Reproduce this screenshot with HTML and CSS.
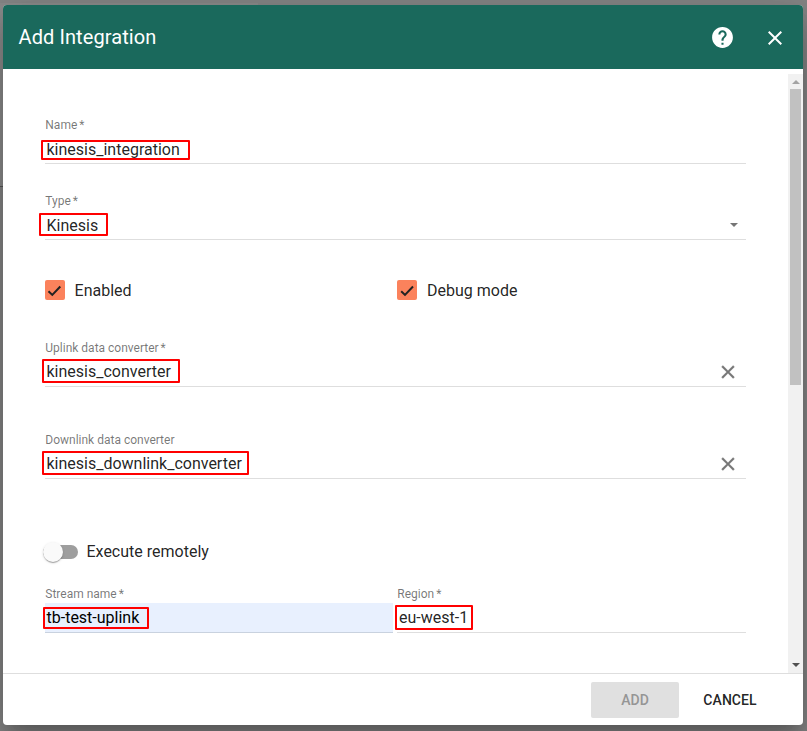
FILE: index.html
```html
<!DOCTYPE html>
<html lang="en">
<head>
<meta charset="utf-8">
<title>Add Integration</title>
<link rel="stylesheet" href="styles.css">
</head>
<body>
<div class="page-card"></div>
<div class="dialog">
  <header class="toolbar">
    <h2 class="title">Add Integration</h2>
    <svg class="help" viewBox="0 0 24 24"><path d="M12 2C6.48 2 2 6.48 2 12s4.48 10 10 10 10-4.48 10-10S17.520 2 12 2zm1 17h-2v-2h2v2zm2.070-7.750l-.9.920C13.450 12.900 13 13.500 13 15h-2v-.5c0-1.100.450-2.100 1.170-2.830l1.240-1.260c.370-.360.590-.860.590-1.410 0-1.100-.9-2-2-2s-2 .9-2 2H8c0-2.210 1.790-4 4-4s4 1.790 4 4c0 .880-.360 1.680-.930 2.250z"/></svg>
    <svg class="close" viewBox="0 0 24 24"><path d="M19 6.410L17.590 5 12 10.590 6.410 5 5 6.410 10.590 12 5 17.590 6.410 19 12 13.410 17.590 19 19 17.590 13.410 12z"/></svg>
  </header>
  <div class="content">
    <form class="form">
      <div class="field name">
        <label>Name <span class="req">*</span></label>
        <div class="value high"><span>kinesis_integration</span><i class="mark mark-name"></i></div>
      </div>
      <div class="field type">
        <label>Type <span class="req">*</span></label>
        <div class="value high"><span>Kinesis</span><i class="mark mark-type"></i><b class="arrow"></b></div>
      </div>
      <div class="columns checks">
        <div class="check"><span class="box"><svg viewBox="0 0 20 20"><path d="M3.500 11.200L7.300 14.900 15.300 6.500"/></svg></span><span>Enabled</span></div>
        <div class="check debug"><span class="box"><svg viewBox="0 0 20 20"><path d="M4.200 11.200L8 14.900 16 6.500"/></svg></span><span>Debug mode</span></div>
      </div>
      <div class="field uplink">
        <label>Uplink data converter <span class="req">*</span></label>
        <div class="value"><span>kinesis_converter</span><i class="mark mark-uplink"></i><svg class="clear" viewBox="0 0 24 24"><path d="M19 6.410L17.590 5 12 10.590 6.410 5 5 6.410 10.590 12 5 17.590 6.410 19 12 13.410 17.590 19 19 17.590 13.410 12z"/></svg></div>
      </div>
      <div class="field downlink">
        <label>Downlink data converter</label>
        <div class="value"><span>kinesis_downlink_converter</span><i class="mark mark-downlink"></i><svg class="clear" viewBox="0 0 24 24"><path d="M19 6.410L17.590 5 12 10.590 6.410 5 5 6.410 10.590 12 5 17.590 6.410 19 12 13.410 17.590 19 19 17.590 13.410 12z"/></svg></div>
      </div>
      <div class="remote"><span class="track"><span class="thumb"></span></span><span class="remote-text">Execute remotely</span></div>
      <div class="columns">
        <div class="field">
          <label>Stream name <span class="req">*</span></label>
          <div class="value autofill"><span>tb-test-uplink</span><i class="mark mark-stream"></i></div>
        </div>
        <div class="field">
          <label>Region <span class="req">*</span></label>
          <div class="value region"><span>eu-west-1</span><i class="mark mark-region"></i></div>
        </div>
      </div>
    </form>
    <div class="scrollbar"><span class="up"></span><span class="bar"></span><span class="down"></span></div>
  </div>
  <footer class="actions">
    <div class="btn add">ADD</div>
    <div class="btn cancel">CANCEL</div>
  </footer>
</div>
</body>
</html>
```
FILE: styles.css
```css
* { box-sizing: border-box; }
body {
  margin: 0;
  width: 807px;
  height: 731px;
  padding: 5px 4px 6px 3px;
  overflow: hidden;
  background: #858585;
  font-family: Roboto, "Liberation Sans", sans-serif;
  color: rgba(0, 0, 0, .87);
}
.page-card {
  position: absolute;
  left: -4px;
  top: 3px;
  width: 262px;
  height: 184px;
  background: #8b8b8b;
  border-bottom: 1px solid #565656;
}
.dialog {
  position: relative;
  width: 800px;
  height: 720px;
  display: flex;
  flex-direction: column;
  background: #fff;
  border-radius: 4px;
  overflow: hidden;
  box-shadow: 0 11px 15px -7px rgba(0, 0, 0, .2), 0 24px 38px 3px rgba(0, 0, 0, .14), 0 9px 46px 8px rgba(0, 0, 0, .12);
}
.toolbar {
  height: 64px;
  flex: none;
  display: flex;
  align-items: center;
  padding: 0 16px 0 15.5px;
  background: #1a695c;
  color: #fff;
}
.title {
  flex: 1;
  margin: 0;
  font-size: 20px;
  font-weight: 400;
  line-height: 32px;
  letter-spacing: .09px;
}
.help, .close { width: 24px; height: 24px; fill: #fff; }
.help { margin-right: 28px; width: 25px; height: 25px; }
.close { margin-top: 2px; }
.content { flex: 1; min-height: 0; display: flex; }
.form { flex: 1; padding: 51px 42px 0; }
.field { height: 44px; display: flex; flex-direction: column; }
.field label {
  height: 14px;
  line-height: 11px;
  padding-left: .3px;
  font-size: 12px;
  color: rgba(0, 0, 0, .54);
}
.req { margin-left: -1px; }
.value {
  position: relative;
  flex: 1;
  display: flex;
  justify-content: space-between;
  padding: 5px 0 0 1.5px;
  border-bottom: 1px solid #dedede;
  font-size: 16px;
  line-height: 20px;
}
.value.high { padding-top: 6px; }
.value.region { padding-left: 2px; }
.value.autofill { background: #e8f0fe; border-color: #c9d2df; color: #000; }
.mark { position: absolute; border: 2px solid #f00; border-radius: 1px; }
.mark-name { left: -4px; top: 6px; width: 149px; height: 20px; }
.mark-type { left: -6px; top: 3px; width: 69px; height: 23px; }
.mark-uplink { left: -3px; top: 2px; width: 138px; height: 24px; }
.mark-downlink { left: -3px; top: 2px; width: 207px; height: 24px; }
.mark-stream { left: -2px; top: 4px; width: 106px; height: 22px; }
.mark-region { left: -2px; top: 2px; width: 78px; height: 25px; }
.arrow {
  width: 0;
  height: 0;
  margin: 7px 8.5px 0 0;
  border: 4px solid transparent;
  border-top-color: #757575;
  border-bottom: 0;
}
.clear { width: 22px; height: 22px; margin: -1px 7px 0 0; fill: #757575; stroke: #757575; stroke-width: .4; }
.type { margin-top: 32px; }
.columns { display: grid; grid-template-columns: 348px 349px; column-gap: 4px; }
.checks { margin: 40px 0 43px; }
.check { display: flex; align-items: center; gap: 9.6px; height: 20px; font-size: 16px; }
.check.debug { gap: 10px; }
.box { width: 20px; height: 20px; border-radius: 2px; background: #fb825c; }
.box svg { display: block; width: 20px; height: 20px; fill: none; stroke: #222; stroke-width: 2; }
.downlink { margin-top: 48px; }
.remote { display: flex; align-items: center; height: 20px; margin: 63px 0 27px -2px; gap: 8.5px; font-size: 16px; }
.remote-text { margin-top: -2px; }
.track { width: 35px; height: 14px; border-radius: 7px; background: #9e9e9e; }
.thumb {
  display: block;
  width: 20px;
  height: 20px;
  margin-top: -3px;
  border-radius: 50%;
  background: #fafafa;
  box-shadow: 0 2px 1px -1px rgba(0, 0, 0, .2), 0 1px 1px rgba(0, 0, 0, .14), 0 1px 3px rgba(0, 0, 0, .12);
}
.scrollbar {
  width: 15px;
  margin-top: 5px;
  display: flex;
  flex-direction: column;
  align-items: center;
  background: #f1f1f1;
}
.up { border: 4px solid transparent; border-top: 0; border-bottom-color: #a3a3a3; margin: 6px 0 5px; }
.bar { width: 11px; height: 296px; background: #c1c1c1; }
.down { border: 4px solid transparent; border-bottom: 0; border-top-color: #505050; margin: auto 0 6px; }
.actions {
  height: 52px;
  flex: none;
  display: flex;
  align-items: center;
  justify-content: flex-end;
  padding: 0 30px 0 0;
  border-top: 1px solid #dedede;
}
.btn {
  height: 36px;
  line-height: 36px;
  padding: 0 16px;
  text-align: center;
  font-size: 14px;
  font-weight: 500;
  border-radius: 2px;
}
.cancel { width: 86px; letter-spacing: .05px; }
.add { width: 88px; margin-right: 8px; background: #e0e0e0; color: #959595; }
```
